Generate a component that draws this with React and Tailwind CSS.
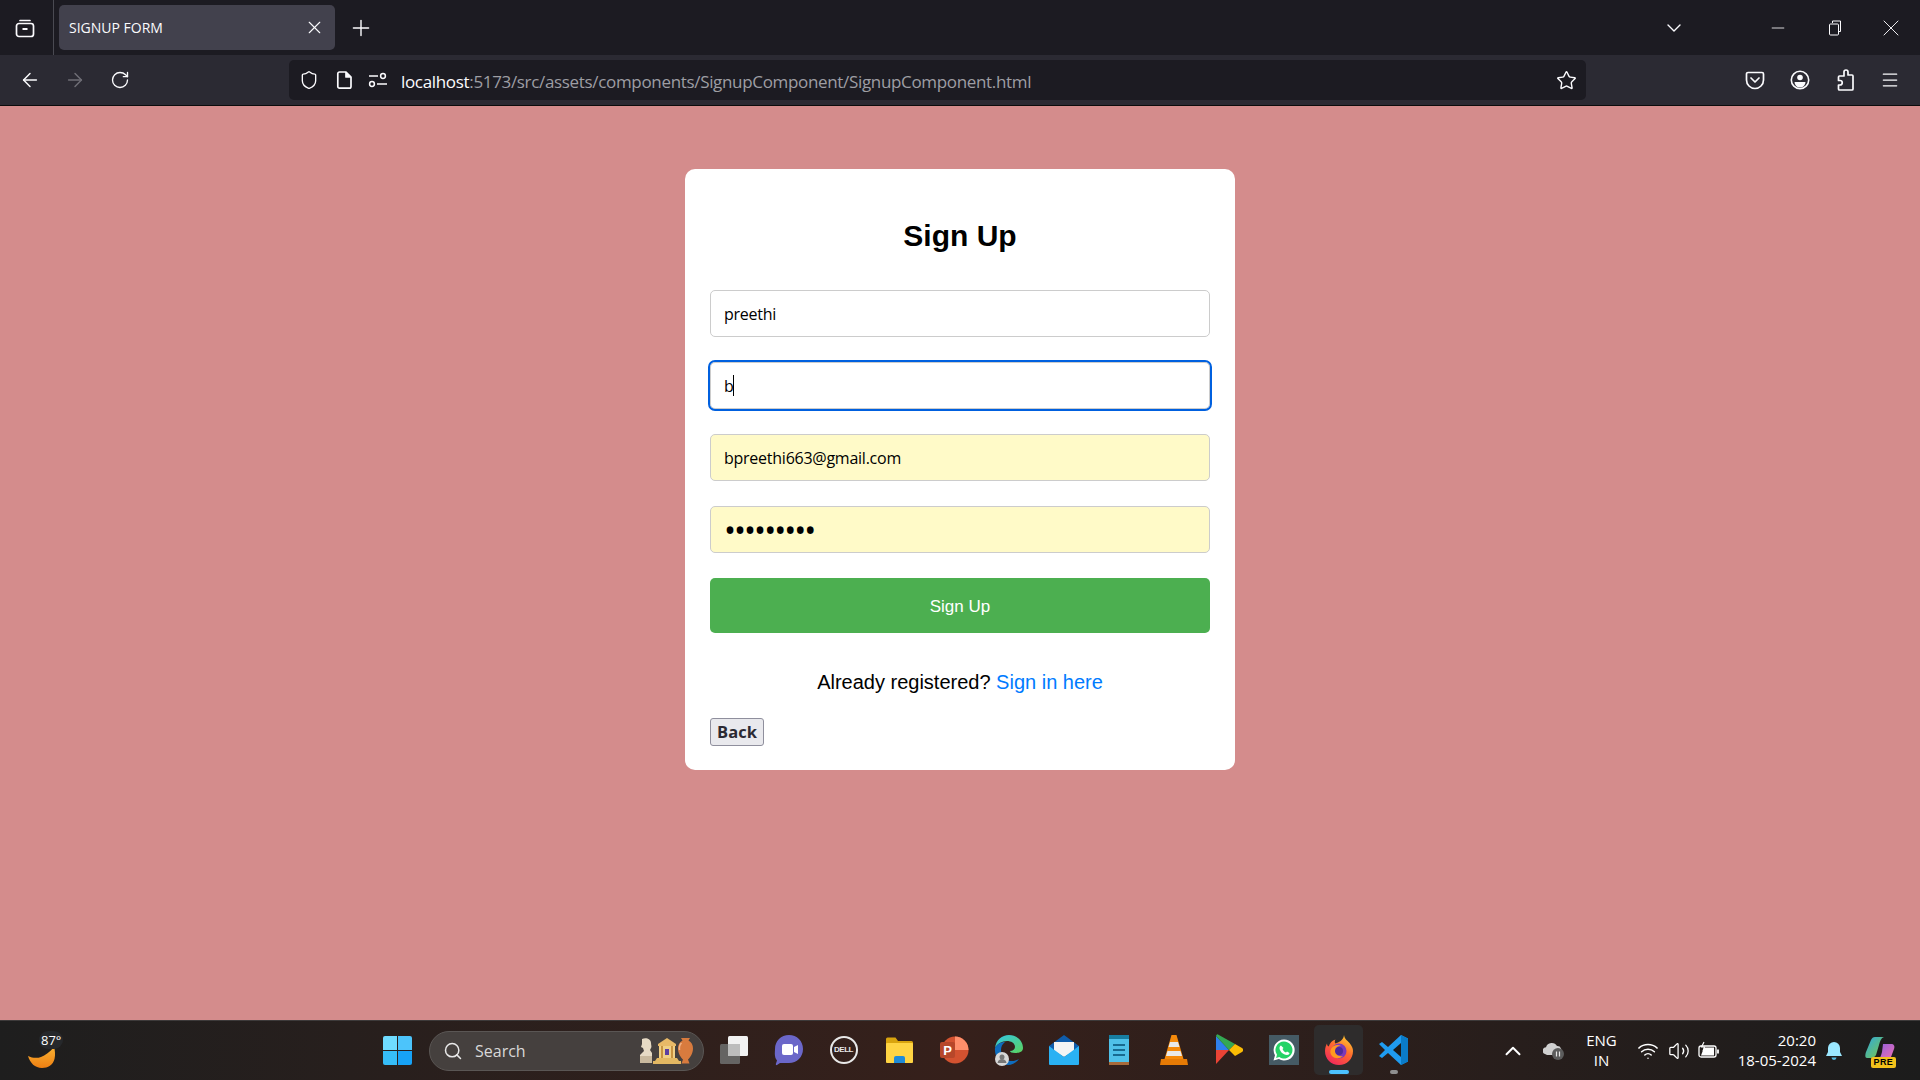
import { ArrowLeft, ArrowRight, ChevronDown, ChevronUp, Menu, Minus, Plus, RotateCw, Search, Shield, Star, Volume2, Wifi, X } from 'lucide-react';

const uiFont = "font-['Open_Sans','Noto_Sans',sans-serif]";

const TabGroupsIcon = () => (
  <svg width="20" height="20" viewBox="0 0 20 20" fill="none" stroke="currentColor" strokeWidth="1.7">
    <path d="M5 2.5h10" strokeLinecap="round" />
    <rect x="1.5" y="5.5" width="17" height="13" rx="2.5" />
    <path d="M7.5 11h5" strokeWidth="2" />
  </svg>
);

const PageIcon = () => (
  <svg width="18" height="20" viewBox="0 0 18 20" fill="none" stroke="currentColor" strokeWidth="1.7" strokeLinejoin="round">
    <path d="M3.5 2h6.5l5 5v9.5a1.7 1.7 0 0 1-1.7 1.7H3.5a1.7 1.7 0 0 1-1.7-1.7V3.7A1.7 1.7 0 0 1 3.5 2z" />
    <path d="M10 2v5h5" fill="currentColor" />
  </svg>
);

const PermissionsIcon = () => (
  <svg width="20" height="16" viewBox="0 0 20 16" fill="none" stroke="currentColor" strokeWidth="1.5">
    <path d="M1 4h9M1 12h0M9 12h10" />
    <circle cx="15" cy="4" r="2.4" />
    <circle cx="4" cy="12" r="2.4" />
  </svg>
);

const PocketIcon = () => (
  <svg width="20" height="20" viewBox="0 0 20 20" fill="none" stroke="currentColor" strokeWidth="1.7" strokeLinecap="round" strokeLinejoin="round">
    <path d="M3 2.5h14A1.5 1.5 0 0 1 18.5 4v6a8.5 8.5 0 0 1-17 0V4A1.5 1.5 0 0 1 3 2.5z" />
    <path d="M6 8l4 4 4-4" />
  </svg>
);

const AccountIcon = () => (
  <svg width="20" height="20" viewBox="0 0 20 20" fill="none" stroke="currentColor" strokeWidth="1.6">
    <circle cx="10" cy="10" r="8.7" />
    <circle cx="10" cy="7.5" r="2.8" fill="currentColor" stroke="none" />
    <path d="M4.5 12h11a5.5 5.5 0 0 1-11 0z" fill="currentColor" stroke="none" />
  </svg>
);

const PuzzleIcon = () => (
  <svg width="20" height="22" viewBox="0 0 20 22" fill="none" stroke="currentColor" strokeWidth="1.7" strokeLinejoin="round">
    <path d="M9 5V3a2 2 0 0 1 4 0v3h4a1 1 0 0 1 1 1v13a1 1 0 0 1-1 1H4.5a1 1 0 0 1-1-1v-4h1.5a2.2 2.2 0 0 0 0-4.5H3.5V8a1 1 0 0 1 1-1H9z" />
  </svg>
);

const RestoreIcon = () => (
  <svg width="12" height="16" viewBox="0 0 12 16" fill="none" stroke="currentColor" strokeWidth="1">
    <path d="M3.5 3V1h8v10.5H9.5" />
    <rect x="0.5" y="4" width="9" height="11" rx="1" />
  </svg>
);

const TabBar = () => (
  <div className="flex h-[55px] shrink-0 items-center bg-[#1c1b22] text-[#fbfbfe]">
    <div className="flex h-full w-[54px] items-center justify-center border-r border-[#4a4a52] pr-[3px]">
      <TabGroupsIcon />
    </div>
    <div className="ml-[5px] flex h-[45px] w-[276px] items-center justify-between rounded-[5px] bg-[#42414d] pl-[10px] pr-[10px]">
      <span className={`${uiFont} text-[14px]`}>SIGNUP FORM</span>
      <X size={21} strokeWidth={1.3} />
    </div>
    <Plus size={26} strokeWidth={1.3} className="ml-[13px]" />
    <div className="flex-1" />
    <ChevronDown size={24} strokeWidth={1.4} className="mr-[82px]" />
    <Minus size={20} strokeWidth={1} className="mr-[41px]" />
    <RestoreIcon />
    <X size={28} strokeWidth={0.8} className="ml-[36px] mr-[15px]" />
  </div>
);

const Toolbar = () => (
  <div className="flex h-[51px] shrink-0 items-center border-b border-[#0c0c0d] bg-[#2b2a33] text-[#fbfbfe]">
    <ArrowLeft size={22} strokeWidth={1.6} className="ml-[19px]" />
    <ArrowRight size={22} strokeWidth={1.6} className="ml-[23px] text-[#6f6e76]" />
    <RotateCw size={20} strokeWidth={1.6} className="ml-[24px]" />
    <div className="ml-[159px] flex h-[40px] w-[1297px] items-center rounded-[5px] bg-[#1c1b22] pl-[10px] pr-[9px]">
      <Shield size={20} strokeWidth={1.6} />
      <div className="ml-[17px] flex"><PageIcon /></div>
      <div className="ml-[14px] flex"><PermissionsIcon /></div>
      <div className={`${uiFont} ml-[13px] pt-[3px] text-[17px] tracking-[-0.33px] text-[#9e9ea4]`}>
        <span className="text-[#fbfbfe]">localhost</span>:5173/src/assets/components/SignupComponent/SignupComponent.html
      </div>
      <div className="flex-1" />
      <Star size={21} strokeWidth={1.6} />
    </div>
    <div className="flex-1" />
    <div className="mr-[25px] flex"><PocketIcon /></div>
    <div className="mr-[25px] flex"><AccountIcon /></div>
    <div className="mr-[25px] flex"><PuzzleIcon /></div>
    <Menu size={20} strokeWidth={1.5} className="mr-[20px]" />
  </div>
);

const fieldClass = `${uiFont} block h-[47px] w-full rounded-[5px] border border-[#cccccc] px-[13px] text-[16px] tracking-[-0.25px] text-black`;

const SignupCard = () => (
  <div className="mt-[63px] w-[550px] self-start rounded-[10px] bg-white px-[25px] pb-[24px] pt-[47px]">
    <h2 className="text-center font-['Liberation_Sans',sans-serif] text-[30px] font-bold leading-[40px] text-black">Sign Up</h2>
    <input readOnly value="preethi" className={`${fieldClass} mt-[34px] bg-white`} />
    <div className="relative mt-[25px]">
      <input readOnly value="b" className={`${fieldClass} bg-white outline-2 outline-[#0060df]`} />
      <span className="absolute left-[23px] top-[13px] h-[21px] w-[1px] bg-black" />
    </div>
    <input readOnly value="bpreethi663@gmail.com" className={`${fieldClass} mt-[25px] bg-[#fffac8]`} />
    <input readOnly type="password" value="123456789" className={`${fieldClass} mt-[25px] bg-[#fffac8] px-[11px] font-['Liberation_Sans',sans-serif] text-[32px] tracking-[-2px]`} />
    <button className="mt-[25px] block h-[55px] w-full rounded-[5px] bg-[#4caf50] pt-[3px] font-['Liberation_Sans',sans-serif] text-[17px] text-white">Sign Up</button>
    <p className="mt-[36px] text-center font-['Liberation_Sans',sans-serif] text-[20px] leading-[26px] text-black">
      Already registered? <a className="text-[#007bff]">Sign in here</a>
    </p>
    <button className={`${uiFont} mt-[23px] block h-[28px] w-[54px] rounded-[3px] border border-[#8f8f9d] bg-[#e9e9ed] text-[16.5px] font-bold text-[#2b2a33]`}>Back</button>
  </div>
);

const WeatherIcon = () => (
  <svg width="30" height="24" viewBox="0 0 30 24">
    <defs>
      <linearGradient id="moon" x1="0" y1="0" x2="0" y2="1">
        <stop offset="0" stopColor="#f9b233" />
        <stop offset="1" stopColor="#ee7f12" />
      </linearGradient>
    </defs>
    <path d="M1 11c4 2 9 2.500 13 1 4-1.500 9-5 13-10 1 3 1.500 8 .5 12C26 20 21 23 15 23 8 23 3 18 1 11z" fill="url(#moon)" />
  </svg>
);

const WindowsLogo = () => (
  <div className="grid h-[29px] w-[29px] grid-cols-2 gap-[1px]">
    <span className="rounded-tl-[2px] bg-[#6fdcff]" />
    <span className="rounded-tr-[2px] bg-[#4cc4fb]" />
    <span className="rounded-bl-[2px] bg-[#36bdf8]" />
    <span className="rounded-br-[2px] bg-[#17a2f6]" />
  </div>
);

// the museum picture at the end of the search pill
const SearchArt = () => (
  <svg width="56" height="30" viewBox="0 0 56 30">
    <path d="M4 3c4-2 9 0 9 4 0 2 1 4 0 5l-1 2 2 3v10H2V19l4-4-1-3-2-1 1-3z" fill="#e6dac4" />
    <path d="M2 20h12v7H2z" fill="#c9b99e" />
    <path d="M20 8l9-6 9 6v2H20z" fill="#e8b967" />
    <path d="M21 10h16v12H21z" fill="#f0cf85" />
    <path d="M23 10h2v12h-2zM33 10h2v12h-2z" fill="#c8923f" />
    <rect x="27" y="13" width="4" height="6" fill="#5c3fa0" />
    <path d="M19 22h20l2 3H17zM15 25h28v3H15z" fill="#e3b862" />
    <path d="M43 2h9l-1.500 2.500c3 1.500 4.500 4.500 4.500 8 0 5-3 9-5 11l1.500 4h-8l1.500-4c-2-2-5-6-5-11 0-3.500 1.500-6.500 4.500-8z" fill="#d87b3e" />
    <path d="M43.500 7c-2 2-2.500 4-2 7" stroke="#f1b284" strokeWidth="1.500" fill="none" />
  </svg>
);

const TaskViewIcon = () => (
  <svg width="30" height="30" viewBox="0 0 30 30">
    <rect x="9" y="1" width="20" height="20" rx="1.5" fill="#f2f2f2" />
    <rect x="1" y="9" width="20" height="20" rx="1.5" fill="#6b6b6b" fillOpacity="0.9" />
    <rect x="9" y="9" width="12" height="12" fill="#bdbdbd" />
  </svg>
);

const MeetIcon = () => (
  <svg width="30" height="32" viewBox="0 0 30 32">
    <path d="M15 1c8 0 14 6 14 14s-6 14-14 14H6l-3 2c-1 .5-1.500-.5-1-1.500l1-3C0 23 1 18 1 15 1 7 7 1 15 1z" fill="#6b67c9" />
    <rect x="8" y="10" width="11" height="11" rx="2" fill="#fff" />
    <path d="M20 13l4-2v9l-4-2z" fill="#fff" />
  </svg>
);

const DellIcon = () => (
  <div className="flex h-[28px] w-[28px] items-center justify-center rounded-full border-2 border-[#e8e8e8] font-['Liberation_Sans',sans-serif] text-[8px] font-bold tracking-[-0.5px] text-[#e8e8e8]">DELL</div>
);

const FolderIcon = () => (
  <svg width="28" height="26" viewBox="0 0 28 26">
    <path d="M1 2a1.500 1.500 0 0 1 1.500-1.500h8L13 4h13.500A1.500 1.500 0 0 1 28 5.500V9H1z" fill="#d9a40e" />
    <rect x="1" y="6" width="27" height="20" rx="1" fill="#ffd443" />
    <path d="M9 21a2 2 0 0 1 2-2h7a2 2 0 0 1 2 2v5H9z" fill="#1f8bd8" />
  </svg>
);

const PowerPointIcon = () => (
  <svg width="30" height="30" viewBox="0 0 30 30">
    <circle cx="16" cy="15" r="13.5" fill="#d35230" />
    <path d="M16 1.500A13.500 13.500 0 0 1 29.500 15H16z" fill="#ff8f6b" />
    <rect x="1" y="7" width="15" height="16" rx="2" fill="#b7472a" />
    <text x="8.5" y="20" textAnchor="middle" fontSize="13" fontWeight="700" fill="#fff" fontFamily="Liberation Sans">P</text>
  </svg>
);

const EdgeIcon = () => (
  <svg width="30" height="32" viewBox="0 0 30 32">
    <defs>
      <linearGradient id="edgeTop" x1="0" y1="0" x2="1" y2="1">
        <stop offset="0" stopColor="#33c6e8" />
        <stop offset="1" stopColor="#5bd35c" />
      </linearGradient>
    </defs>
    <path d="M1 14C2 6 8 1 15 1c8 0 14 6 14 13 0 4-4 5-8 5-3 0-5-1-5-2 3 0 5-2 5-4 0-4-4-6-8-6C8 7 3 10 1 14z" fill="url(#edgeTop)" />
    <path d="M1 14c2-4 6-6 10-6-4 3-5 8-3 13 2 4 6 6 10 6 3 0 5-1 7-2-3 4-7 6-11 6C7 31 0 23 1 14z" fill="#0f6cbd" />
    <circle cx="8" cy="25" r="7" fill="#d8d8d8" />
    <circle cx="8" cy="23" r="2.5" fill="#777" />
    <path d="M3.500 29c.5-3 2.500-4 4.500-4s4 1 4.500 4z" fill="#777" />
  </svg>
);

const MailIcon = () => (
  <svg width="30" height="30" viewBox="0 0 30 30">
    <path d="M15 0L30 11v3H0v-3z" fill="#0f5cab" />
    <path d="M5 7h20v9l-10 6-10-6z" fill="#f4f4f4" />
    <path d="M0 11l15 11 15-11v18a1 1 0 0 1-1 1H1a1 1 0 0 1-1-1z" fill="#2ab1f3" />
  </svg>
);

const NotepadIcon = () => (
  <svg width="22" height="32" viewBox="0 0 22 32">
    <rect x="1" y="3" width="20" height="28" rx="1" fill="#4fc0e8" />
    <rect x="1" y="28" width="20" height="3" fill="#a86a3a" />
    <rect x="1" y="1" width="20" height="4" fill="#177da0" />
    <path d="M5 10h12v2H5zM5 15h12v2H5zM5 20h12v2H5z" fill="#176a90" />
  </svg>
);

const VlcIcon = () => (
  <svg width="28" height="32" viewBox="0 0 28 32">
    <path d="M11.500 1h5l7 24h-19z" fill="#f58a0b" />
    <path d="M10 8h8l1.500 5h-11zM7.500 17h13l1.500 5H6z" fill="#e9e9e9" />
    <path d="M1 25h26l1 6H0z" fill="#e67a05" />
  </svg>
);

const PlayIcon = () => (
  <svg width="28" height="32" viewBox="0 0 28 32">
    <path d="M1 2v14h13z" fill="#2f80ed" />
    <path d="M1 2l13 14 6-6L3 .5C2 0 1.500 1 1 2z" fill="#34a853" />
    <path d="M1 30V16h13z" fill="#ea4335" />
    <path d="M14 16l6-6 7 4c1.500 1 1.500 3 0 4l-7 4z" fill="#fbbc04" />
  </svg>
);

const WhatsAppIcon = () => (
  <div className="flex h-[30px] w-[30px] items-center justify-center bg-[#455a64]">
    <svg width="24" height="24" viewBox="0 0 24 24">
      <path d="M12 1.500A10.500 10.500 0 0 0 3 17.300L1.500 22.500l5.400-1.400A10.500 10.500 0 1 0 12 1.500z" fill="#fff" />
      <path d="M12 3.500a8.500 8.500 0 0 0-7 13.300l-.9 3.100 3.200-.8A8.500 8.500 0 1 0 12 3.500z" fill="#25d366" />
      <path d="M9 7.500c-.5 0-1.500 1-1.500 2.500 0 3 3.500 7 7.500 7 1.500 0 2.500-1 2.500-2l-2.500-1.500-1 1c-1.500-.5-3-2-3.500-3.500l1-1z" fill="#fff" />
    </svg>
  </div>
);

const FirefoxIcon = () => (
  <svg width="30" height="30" viewBox="0 0 30 30">
    <defs>
      <linearGradient id="ffOuter" x1="0.8" y1="0" x2="0.2" y2="1">
        <stop offset="0" stopColor="#ffd02e" />
        <stop offset="0.45" stopColor="#ff6a2e" />
        <stop offset="1" stopColor="#f0245f" />
      </linearGradient>
    </defs>
    <path d="M20 0c.5 4 3 5 5.500 8C28 11 29 13.500 29 16c0 8-6 14-14 14S1 24 1 16c0-3 1-6 2-7.500 0 1.500.7 2.500 1.700 3C6 8 8 5.500 11.500 4.500c-1 1.500-1 3 0 4 3-1 8-3 8.500-8.500z" fill="url(#ffOuter)" />
    <circle cx="15" cy="16" r="7.500" fill="#7b3ab8" />
    <circle cx="15" cy="16" r="4" fill="#4d2a9c" />
    <path d="M7 14c2-4 7-5 10-3-4 0-6 2-6 5 0 3 3 6 8 5-3 3-8 3-11 0-2-2-2-5-1-7z" fill="#ff9a1f" />
  </svg>
);

const VsCodeIcon = () => (
  <svg width="30" height="32" viewBox="0 0 30 32">
    <path d="M22 1l7 3.500v23L22 31 9 19l-6 5-3-2 6-6-6-6 3-2 6 5z" fill="#1f9cf0" />
    <path d="M22 9l-8 7 8 7z" fill="#1c1c1c" />
    <path d="M22 1l7 3.500v23L22 31z" fill="#0a7cc9" />
  </svg>
);

const CloudPausedIcon = () => (
  <svg width="22" height="20" viewBox="0 0 22 20">
    <path d="M2 13a3.500 3.500 0 0 1 1-6.800A6 6 0 0 1 14 5a4 4 0 0 1 3 7l-2 2H4z" fill="#d0d0d0" />
    <circle cx="15" cy="13" r="6" fill="#5c5c5c" />
    <path d="M13.500 10.500v5M16.500 10.500v5" stroke="#e5e5e5" strokeWidth="1.200" />
  </svg>
);

const BatteryIcon = () => (
  <svg width="22" height="20" viewBox="0 0 22 20" fill="none" stroke="#fff" strokeWidth="1.300">
    <rect x="1" y="5" width="17" height="11" rx="2" />
    <path d="M20 8.500v4" strokeWidth="1.800" />
    <path d="M3 14.500l3-8h10v8z" fill="#fff" stroke="none" />
    <path d="M6 1L3.500 6h3L5 10" strokeWidth="1.100" />
  </svg>
);

const BellIcon = () => (
  <svg width="18" height="20" viewBox="0 0 18 20">
    <path d="M9 1a6 6 0 0 1 6 6v4l2 4H1l2-4V7a6 6 0 0 1 6-6z" fill="#9be7ff" />
    <path d="M6.500 16.500h5a2.500 2.500 0 0 1-5 0z" fill="#52b8e0" />
  </svg>
);

const CopilotIcon = () => (
  <div className="relative h-[30px] w-[30px]">
    <svg width="30" height="26" viewBox="0 0 30 26">
      <defs>
        <linearGradient id="copA" x1="0" y1="0" x2="1" y2="1">
          <stop offset="0" stopColor="#2fa8e0" />
          <stop offset="1" stopColor="#7ac943" />
        </linearGradient>
        <linearGradient id="copB" x1="0" y1="0" x2="1" y2="1">
          <stop offset="0" stopColor="#8f5fe0" />
          <stop offset="1" stopColor="#f06fb0" />
        </linearGradient>
      </defs>
      <path d="M10 1h9c-3 1-4 4-5 8l-3 10c-1 2-3 3-5 3H2C0 22 0 19 1 16L6 4c1-2 2-3 4-3z" fill="url(#copA)" />
      <path d="M18 8h8c3 0 4 2 3 5l-3 8c-1 2-3 3-5 3h-9c3-1 4-4 5-8z" fill="url(#copB)" />
    </svg>
    <span className="absolute bottom-[-2px] right-[-1px] rounded-[2px] bg-[#f3c11b] px-[3px] font-['Liberation_Sans',sans-serif] text-[9px] font-bold leading-[11px] tracking-[0.3px] text-black">PRE</span>
  </div>
);

const taskbarIcons = [TaskViewIcon, MeetIcon, DellIcon, FolderIcon, PowerPointIcon, EdgeIcon, MailIcon, NotepadIcon, VlcIcon, PlayIcon, WhatsAppIcon];

const Taskbar = () => (
  <div className={`${uiFont} flex h-[60px] shrink-0 items-center border-t border-[#3d3a3a] bg-gradient-to-r from-[#1e1e1e] via-[#36201b] to-[#1c1c1c] text-white`}>
    <div className="relative ml-[27px] mt-[12px] flex w-[32px]">
      <WeatherIcon />
      <span className="absolute left-[12px] top-[-14px] rounded-full bg-[#26282b] px-[2px] text-[13px] leading-[18px]">87°</span>
    </div>
    <div className="ml-[324px] flex"><WindowsLogo /></div>
    <div className="ml-[17px] flex h-[40px] w-[275px] items-center rounded-full border border-[#5a5654] bg-[#45403e] pl-[13px] pr-[9px]">
      <Search size={20} strokeWidth={1.8} className="text-[#e8e8e8]" />
      <span className="ml-[12px] text-[16px] text-[#d8d8d8]">Search</span>
      <div className="flex-1" />
      <SearchArt />
    </div>
    <div className="mb-[2px] ml-[2px] flex items-center">
      {taskbarIcons.map((Icon, i) => (
        <div key={i} className="flex h-[55px] w-[55px] items-center justify-center">
          <Icon />
        </div>
      ))}
      <div className="relative mx-[3px] flex h-[50px] w-[49px] items-center justify-center rounded-[5px] bg-[#2e2c2c]">
        <FirefoxIcon />
        <span className="absolute bottom-[1px] h-[4px] w-[20px] rounded-full bg-[#4cc2ff]" />
      </div>
      <div className="relative flex h-[50px] w-[55px] items-center justify-center">
        <VsCodeIcon />
        <span className="absolute bottom-[1px] h-[4px] w-[8px] rounded-full bg-[#8f8f8f]" />
      </div>
    </div>
    <div className="flex-1" />
    <ChevronUp size={26} strokeWidth={1.8} className="mr-[17px]" />
    <div className="mr-[21px] flex"><CloudPausedIcon /></div>
    <div className="mb-[2px] mr-[20px] text-center text-[15px] leading-[20px]">ENG<br />IN</div>
    <Wifi size={22} strokeWidth={1.6} className="mr-[9px]" />
    <Volume2 size={22} strokeWidth={1.4} className="mr-[8px]" />
    <div className="mr-[18px] flex"><BatteryIcon /></div>
    <div className="mb-[2px] mr-[9px] text-right text-[15px] leading-[20px]">20:20<br />18-05-2024</div>
    <div className="mr-[22px] flex"><BellIcon /></div>
    <div className="mr-[25px] flex"><CopilotIcon /></div>
  </div>
);

export default function App() {
  return (
    <div className="flex h-screen flex-col overflow-hidden">
      <TabBar />
      <Toolbar />
      <main className="flex flex-1 justify-center bg-[#d48c8c]">
        <SignupCard />
      </main>
      <Taskbar />
    </div>
  );
}
